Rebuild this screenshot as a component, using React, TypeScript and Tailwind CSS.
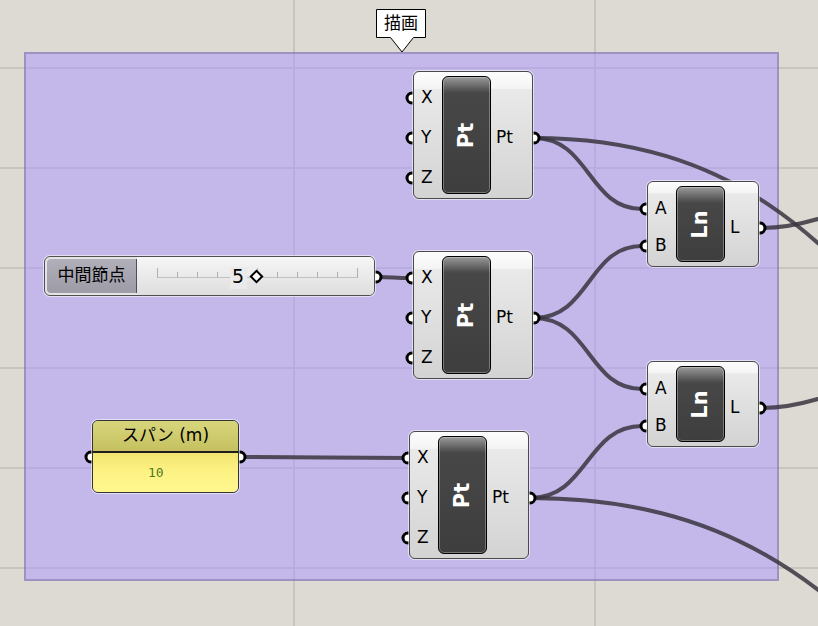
import React from "react";

const FONT = "font-['DejaVu_Sans','Noto_Sans_CJK_JP',sans-serif]";

// wires between grips (canvas coordinates)
const WIRES = [
  "M534 138 C590 138 588 209 642 209",
  "M534 138 C937 138 900 560 1300 560",
  "M534 318 C590 318 588 246 642 246",
  "M534 318 C590 318 588 389 642 389",
  "M530 498 C588 498 586 426 642 426",
  "M530 498 C933 498 900 857 1300 857",
  "M761 228 C850 228 900 160 1050 160",
  "M761 408 C850 408 900 340 1050 340",
  "M377 277 C392 277 394 278 411 278",
  "M241 457 C320 457 330 458 408 458",
];

const GRIPS: [number, number][] = [
  [412, 98], [412, 138], [412, 178], [534, 138],
  [412, 278], [412, 318], [412, 358], [534, 318],
  [408, 458], [408, 498], [408, 538], [530, 498],
  [646, 209], [646, 246], [760, 228],
  [646, 389], [646, 426], [760, 408],
  [376, 277], [91, 457], [240, 457],
];

const BOX =
  "absolute flex rounded-[6px] border border-[#4a4a4a] bg-[linear-gradient(#fdfdfd_0%,#f4f4f4_13%,#e9e9e9_14%,#d3d3d3_100%)] shadow-[0_0_0_1px_rgba(255,255,255,0.55)] text-black";

function DarkBlock({ label }: { label: string }) {
  return (
    <div className="w-[49px] my-[4px] shrink-0 rounded-[6px] border border-black bg-[linear-gradient(#9a9a9a_0px,#5a5a5a_12px,#474747_16px,#3e3e3e_100%)] shadow-[inset_0_0_0_1px_rgba(255,255,255,0.3)] flex items-center justify-center">
      <span className="-rotate-90 text-white font-bold text-[21px] leading-none">{label}</span>
    </div>
  );
}

function PtNode({ pos }: { pos: string }) {
  return (
    <div className={`${BOX} ${pos} w-[120px] h-[128px]`}>
      <div className="w-[28px] shrink-0 flex flex-col pt-[6px] pl-[7px]">
        {["X", "Y", "Z"].map((l) => (
          <div key={l} className="h-[40px] flex items-center text-[17px]">
            {l}
          </div>
        ))}
      </div>
      <DarkBlock label="Pt" />
      <div className="flex-1 flex items-center pt-[6px] pl-[5px] text-[17px]">Pt</div>
    </div>
  );
}

function LnNode({ pos }: { pos: string }) {
  return (
    <div className={`${BOX} ${pos} w-[112px] h-[86px]`}>
      <div className="w-[28px] shrink-0 flex flex-col pt-[8px] pl-[7px]">
        {["A", "B"].map((l) => (
          <div key={l} className="h-[37px] flex items-center text-[17px]">
            {l}
          </div>
        ))}
      </div>
      <DarkBlock label="Ln" />
      <div className="flex-1 flex items-center pt-[8px] pl-[5px] text-[17px]">L</div>
    </div>
  );
}

function Slider() {
  const ticks = Array.from({ length: 11 }, (_, i) => 20 + i * 20);
  return (
    <div className="absolute left-[44px] top-[256px] w-[331px] h-[40px] flex rounded-[6px] border border-[#505050] bg-[#e4e4e4] shadow-[0_0_0_1px_rgba(255,255,255,0.55)]">
      <div className="w-[90px] m-[2px] mr-0 rounded-l-[4px] border-r border-[#505050] bg-linear-to-b from-[#b0afba] to-[#9c9ba6] flex items-center justify-center text-[17px] text-black">
        中間節点
      </div>
      <div className="flex-1 relative rounded-r-[5px] bg-linear-to-b from-[#f6f6f6] to-[#dedede]">
        <svg className="absolute inset-0" width="238" height="38">
          <line x1="20" y1="20.5" x2="220" y2="20.5" stroke="#c2c2c2" strokeWidth="1" />
          {ticks.map((x, i) => (
            <line
              key={x}
              x1={x + 0.5}
              x2={x + 0.5}
              y1={i === 0 || i === 5 || i === 10 ? 11 : 15}
              y2="21"
              stroke="#b0b0b0"
              strokeWidth="1"
            />
          ))}
          <rect x="93" y="10" width="17" height="22" fill="#eaeaea" />
          <rect x="115.5" y="15.5" width="8" height="8" fill="#fff" stroke="#000" strokeWidth="2" transform="rotate(45 119.5 19.5)" />
        </svg>
        <span className="absolute left-[95px] top-[7px] text-[19px] leading-[24px] text-black">5</span>
      </div>
    </div>
  );
}

function Panel() {
  return (
    <div className="absolute left-[92px] top-[420px] w-[147px] h-[73px] rounded-[6px] border border-[#333] overflow-hidden flex flex-col shadow-[0_0_0_1px_rgba(255,255,255,0.55)]">
      <div className="h-[32px] shrink-0 border-b-2 border-[#1e1e1e] bg-linear-to-b from-[#d8d67c] to-[#c5c160] flex items-center justify-center text-[17px] text-black">
        スパン (m)
      </div>
      <div className="flex-1 bg-linear-to-b from-[#f1e56f] via-[#fdf385] to-[#fff68e] flex items-center pl-[55px] font-['DejaVu_Sans_Mono',monospace] text-[13px] text-[#4f7a22]">
        10
      </div>
    </div>
  );
}

export default function App() {
  return (
    <div className={`relative w-[818px] h-[626px] overflow-hidden bg-[#dddad3] ${FONT}`}>
      {/* canvas grid */}
      <svg className="absolute inset-0" width="818" height="626">
        {[68, 168, 268, 368, 468, 568].map((y) => (
          <line key={y} x1="0" x2="818" y1={y} y2={y} stroke="#c8c5be" strokeWidth="2" />
        ))}
        {[294, 595].map((x) => (
          <line key={x} x1={x} x2={x} y1="0" y2="626" stroke="#c8c5be" strokeWidth="2" />
        ))}
      </svg>

      {/* group */}
      <div className="absolute left-[24px] top-[52px] w-[755px] h-[529px] bg-[rgba(170,150,255,0.5)] border-2 border-[rgba(110,100,145,0.45)]" />

      {/* wires + grips */}
      <svg className="absolute inset-0" width="818" height="626">
        {WIRES.map((d, i) => (
          <path key={i} d={d} fill="none" stroke="#3a3540" strokeOpacity="0.85" strokeWidth="4" />
        ))}
        {GRIPS.map(([x, y], i) => (
          <circle key={i} cx={x} cy={y} r="5" fill="#fff" stroke="#000" strokeWidth="3" />
        ))}
      </svg>

      <Slider />
      <Panel />
      <PtNode pos="left-[413px] top-[71px]" />
      <PtNode pos="left-[413px] top-[251px]" />
      <PtNode pos="left-[409px] top-[431px]" />
      <LnNode pos="left-[647px] top-[181px]" />
      <LnNode pos="left-[647px] top-[361px]" />

      {/* group name bubble */}
      <svg className="absolute inset-0 pointer-events-none" width="818" height="626">
        <path d="M376.5 9.5 H425.5 V37.5 H413.5 L402 52 L390.5 37.5 H376.5 Z" fill="#fff" stroke="#000" strokeWidth="1" />
      </svg>
      <div className="absolute left-[377px] top-[10px] w-[48px] h-[27px] flex items-center justify-center text-[17px] text-black">
        描画
      </div>
    </div>
  );
}
